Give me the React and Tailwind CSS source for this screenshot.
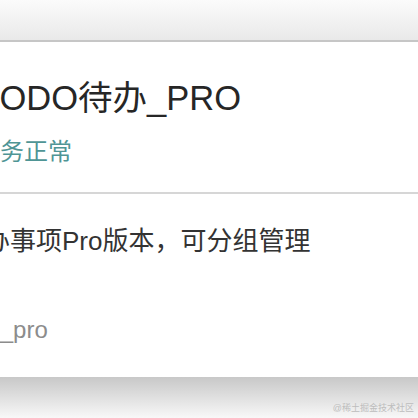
import React from "react";

export default function App() {
  const font = { fontFamily: '"Liberation Sans", "Noto Sans CJK SC", sans-serif' };
  return (
    <div className="relative w-[418px] h-[418px] overflow-hidden bg-white" style={font}>
      <div className="h-[40px] bg-gradient-to-b from-[#fbfbfb] to-[#e9e9e9]" />
      <div className="h-[2px] bg-[#c6c6c6]" />
      <div className="bg-white pt-[39px] pb-[35px]">
        <div className="-ml-[21px] flex flex-col whitespace-nowrap">
          <div className="text-[34.5px] leading-[34px] text-[#262626]">TODO待办_PRO</div>
          <div className="mt-[25px] -ml-[3px] text-[24px] leading-[24px] text-[#4f9595]">服务正常</div>
        </div>
        <div className="mt-[28px] h-[2px] bg-[#d6d6d6]" />
        <div className="mt-[34px] -ml-[42px] whitespace-nowrap text-[26px] leading-[26px] text-[#333333]">
          待办事项Pro版本，可分组管理
        </div>
        <div className="mt-[64px] -ml-[47px] whitespace-nowrap text-[24px] leading-[24px] text-[#8c8c8c]">
          todo_pro
        </div>
      </div>
      <div className="h-[41px] bg-gradient-to-b from-[#c8c8c8] to-[#f8f8f8]" />
      <div className="absolute right-[4px] bottom-[4px] text-[9px] leading-[11px] text-[#bdbdbd]">
        @稀土掘金技术社区
      </div>
    </div>
  );
}
